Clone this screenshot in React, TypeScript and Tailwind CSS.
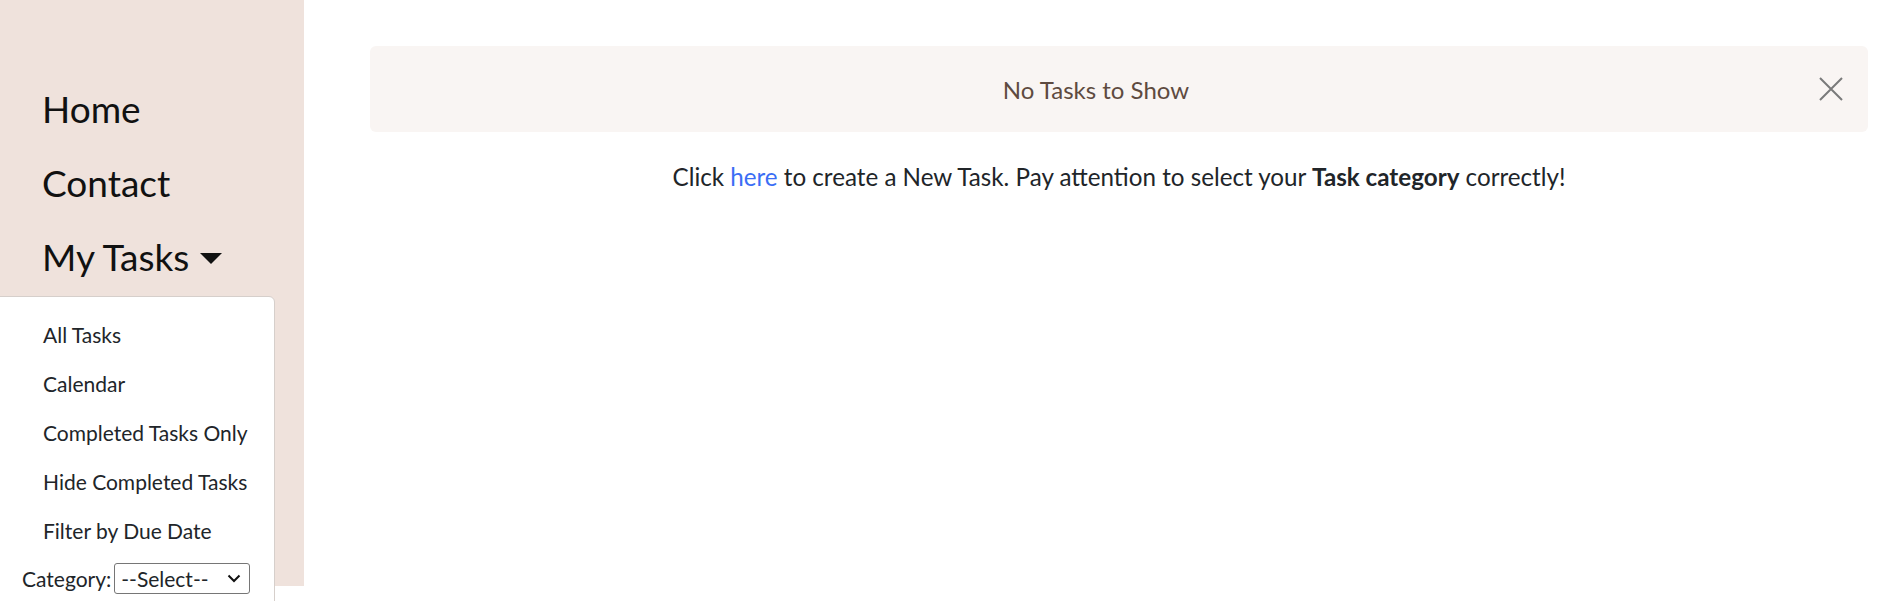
import React from 'react'

const menuItems = ['All Tasks', 'Calendar', 'Completed Tasks Only', 'Hide Completed Tasks', 'Filter by Due Date']

const Sidebar = () => (
  <aside className="relative w-[304px] h-[586px] shrink-0 bg-[#efe2dc]">
    <nav className="pt-[72px] pl-[42px] text-[37px] leading-[74px] text-[#111]">
      <div>Home</div>
      <div>Contact</div>
      <div className="flex items-center gap-[11px]">
        My Tasks
        <svg width="22" height="11" viewBox="0 0 22 11" className="mt-[2px]">
          <path d="M0 0 L22 0 L11 11 Z" fill="#111" />
        </svg>
      </div>
    </nav>

    {/* dropdown menu */}
    <div className="absolute left-[-1px] top-[296px] w-[276px] h-[330px] bg-white border border-[#d6cfcb] rounded-tr-[6px]">
      <ul className="pt-[13px] text-[21px] leading-[49px] text-[#212529]">
        {menuItems.map((item) => (
          <li key={item} className="pl-[43px]">{item}</li>
        ))}
      </ul>
      <div className="flex items-center pl-[22px] text-[21px] text-[#212529] mt-[8px]">
        <span>Category:</span>
        <div className="ml-[3px] w-[136px] h-[31px] border border-[#767676] rounded-[3px] flex items-center justify-between pl-[6px] pr-[8px]">
          <span>--Select--</span>
          <svg width="14" height="9" viewBox="0 0 14 9">
            <path d="M1.5 1.5 L7 7 L12.5 1.5" fill="none" stroke="#111" strokeWidth="2" />
          </svg>
        </div>
      </div>
    </div>
  </aside>
)

export default function App() {
  return (
    <div className="flex w-full min-h-[601px] bg-white overflow-hidden" style={{ fontFamily: 'Lato, "Open Sans", sans-serif' }}>
      <Sidebar />
      <main className="flex-1 pt-[46px] pl-[66px] pr-[20px]">
        <div className="relative h-[86px] rounded-[6px] bg-[#f9f5f3] flex items-center justify-center pr-[46px]">
          <span className="text-[24px] text-[#5e4a40] mt-[1px]">No Tasks to Show</span>
          <button className="absolute right-[25px] top-[31px] w-[24px] h-[24px]">
            <svg width="24" height="24" viewBox="0 0 24 24">
              <path d="M1 1 L23 23 M23 1 L1 23" stroke="#7a7a7a" strokeWidth="2" fill="none" />
            </svg>
          </button>
        </div>
        <p className="mt-[27px] text-center text-[24.2px] text-[#212529]">
          Click <a className="text-[#3b6ef5]">here</a> to create a New Task. Pay attention to select your <b>Task category</b> correctly!
        </p>
      </main>
    </div>
  )
}
